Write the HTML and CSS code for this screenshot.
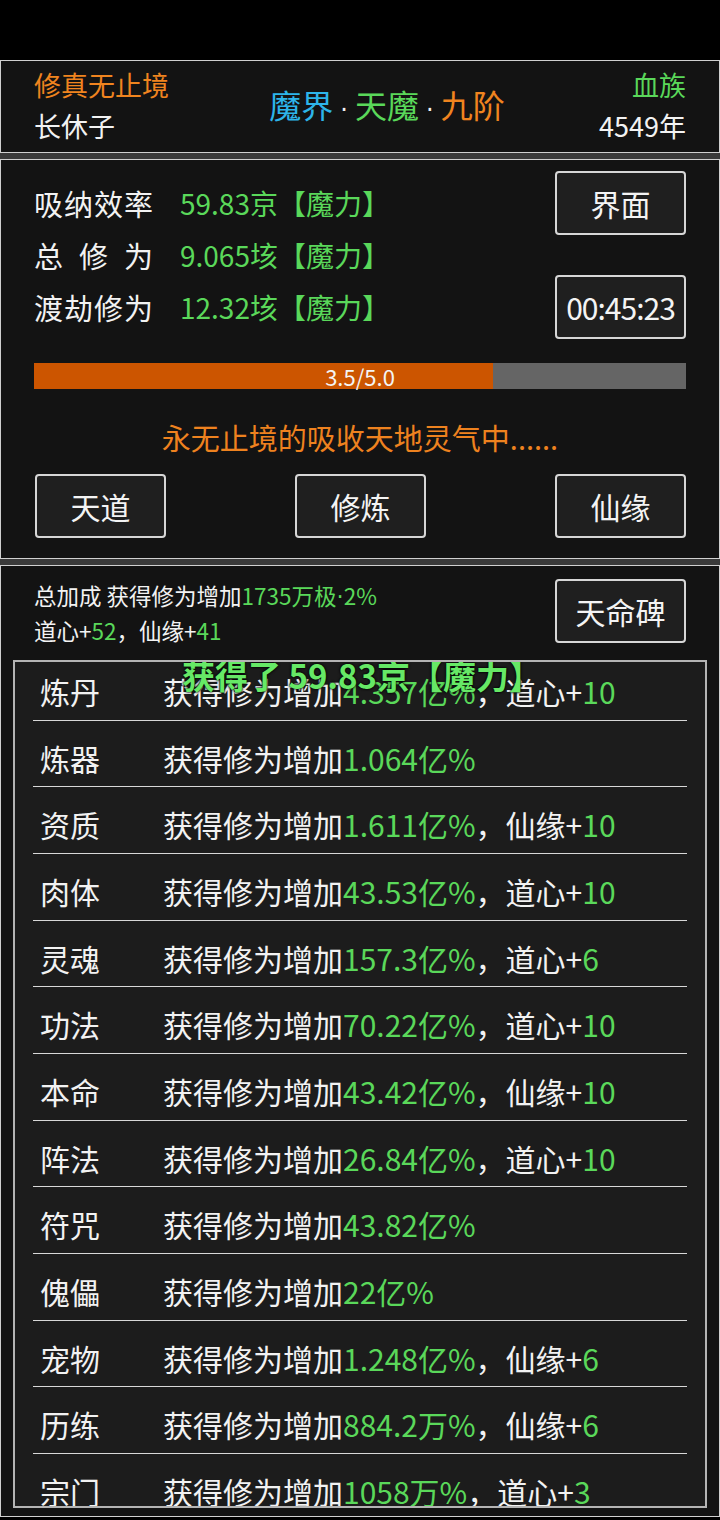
FILE: index.html
```html
<!DOCTYPE html>
<html lang="zh">
<head>
    <meta charset="UTF-8">
    <meta name="viewport" content="width=device-width, initial-scale=1.0">
    <title>修真无止境</title>
    <link rel="stylesheet" href="styles.css">
</head>
<body>
    <div class="status-bar"></div>

    <div class="panels">
        <!-- 头部信息 -->
        <div class="panel header">
            <div class="header-side">
                <div class="orange">修真无止境</div>
                <div>长休子</div>
            </div>
            <div class="realm">
                <span class="cyan">魔界</span><span class="dot">·</span><span class="green">天魔</span><span class="dot">·</span><span class="orange">九阶</span>
            </div>
            <div class="header-side right">
                <div class="green">血族</div>
                <div>4549年</div>
            </div>
        </div>

        <!-- 修炼面板 -->
        <div class="panel cultivate">
            <div class="cultivate-top">
                <div class="stats">
                    <div class="stat-row">
                        <span class="stat-label">吸纳效率</span>
                        <span class="green">59.83京【魔力】</span>
                    </div>
                    <div class="stat-row">
                        <span class="stat-label">总修为</span>
                        <span class="green">9.065垓【魔力】</span>
                    </div>
                    <div class="stat-row">
                        <span class="stat-label">渡劫修为</span>
                        <span class="green">12.32垓【魔力】</span>
                    </div>
                </div>
                <div class="side-buttons">
                    <button class="btn">界面</button>
                    <button class="btn timer">00:45:23</button>
                </div>
            </div>

            <div class="progress">
                <div class="progress-fill" style="width: 70.4%"></div>
                <span class="progress-text">3.5/5.0</span>
            </div>

            <div class="state-text">永无止境的吸收天地灵气中......</div>

            <div class="action-buttons">
                <button class="btn">天道</button>
                <button class="btn">修炼</button>
                <button class="btn">仙缘</button>
            </div>
        </div>

        <!-- 加成面板 -->
        <div class="panel bonus">
            <div class="bonus-top">
                <div class="bonus-summary">
                    <div>总加成 获得修为增加<span class="green">1735万极<span class="dot">·</span>2%</span></div>
                    <div>道心+<span class="green">52</span>，仙缘+<span class="green">41</span></div>
                </div>
                <button class="btn">天命碑</button>
            </div>

            <div class="bonus-box">
                <div class="toast">获得了 59.83京【魔力】</div>
                <div class="bonus-list">
                    <div class="bonus-row"><span class="row-name">炼丹</span><span>获得修为增加<span class="green">4.357亿%</span>，道心+<span class="green">10</span></span></div>
                    <div class="bonus-row"><span class="row-name">炼器</span><span>获得修为增加<span class="green">1.064亿%</span></span></div>
                    <div class="bonus-row"><span class="row-name">资质</span><span>获得修为增加<span class="green">1.611亿%</span>，仙缘+<span class="green">10</span></span></div>
                    <div class="bonus-row"><span class="row-name">肉体</span><span>获得修为增加<span class="green">43.53亿%</span>，道心+<span class="green">10</span></span></div>
                    <div class="bonus-row"><span class="row-name">灵魂</span><span>获得修为增加<span class="green">157.3亿%</span>，道心+<span class="green">6</span></span></div>
                    <div class="bonus-row"><span class="row-name">功法</span><span>获得修为增加<span class="green">70.22亿%</span>，道心+<span class="green">10</span></span></div>
                    <div class="bonus-row"><span class="row-name">本命</span><span>获得修为增加<span class="green">43.42亿%</span>，仙缘+<span class="green">10</span></span></div>
                    <div class="bonus-row"><span class="row-name">阵法</span><span>获得修为增加<span class="green">26.84亿%</span>，道心+<span class="green">10</span></span></div>
                    <div class="bonus-row"><span class="row-name">符咒</span><span>获得修为增加<span class="green">43.82亿%</span></span></div>
                    <div class="bonus-row"><span class="row-name">傀儡</span><span>获得修为增加<span class="green">22亿%</span></span></div>
                    <div class="bonus-row"><span class="row-name">宠物</span><span>获得修为增加<span class="green">1.248亿%</span>，仙缘+<span class="green">6</span></span></div>
                    <div class="bonus-row"><span class="row-name">历练</span><span>获得修为增加<span class="green">884.2万%</span>，仙缘+<span class="green">6</span></span></div>
                    <div class="bonus-row"><span class="row-name">宗门</span><span>获得修为增加<span class="green">1058万%</span>，道心+<span class="green">3</span></span></div>
                </div>
            </div>
        </div>
    </div>
</body>
</html>
```

FILE: styles.css
```css
body {
    margin: 0;
    width: 720px;
    height: 1520px;
    overflow: hidden;
    background-color: #000;
    color: #f2f2f2;
    font-family: "Noto Sans CJK SC", "Noto Sans", sans-serif;
}

.status-bar {
    height: 60px;
    background-color: #000;
}

.panels {
    display: flex;
    flex-direction: column;
    gap: 6px;
    background-color: #3a3a3a;
}

.panel {
    box-sizing: border-box;
    border: 1px solid #d0d0d0;
    background-color: #131313;
    padding: 0 33px 0 33px;
}

.green {
    color: #5ad85a;
}

.orange {
    color: #f0841f;
}

.cyan {
    color: #2db5ea;
}

/* narrow middle dot, the CJK font draws it full width */
.dot {
    font-family: "DejaVu Sans", sans-serif;
}

/* header */
.header {
    height: 93px;
    display: flex;
    justify-content: space-between;
    align-items: center;
}

.header-side {
    font-size: 27px;
    line-height: 41px;
    margin-top: -4px;
    width: 160px;
}

.header-side.right {
    text-align: right;
}

.realm {
    font-size: 32px;
    margin-top: -6px;
    margin-left: 54px;
}

.realm .dot {
    color: #f2f2f2;
    font-size: 24px;
    padding: 0 7px;
}

/* cultivate */
.cultivate {
    height: 400px;
    padding-top: 11px;
}

.cultivate-top {
    display: flex;
    justify-content: space-between;
}

.stats {
    padding-top: 6px;
    font-size: 28px;
}

.stat-row {
    display: flex;
    line-height: 52px;
    height: 52px;
}

.stat-label {
    width: 119px;
    margin-right: 27px;
    text-align-last: justify;
    font-size: 29px;
}

.side-buttons {
    display: flex;
    flex-direction: column;
    gap: 40px;
}

.btn {
    box-sizing: border-box;
    width: 131px;
    height: 64px;
    border: 2px solid #d6d6d6;
    border-radius: 4px;
    background-color: #1f1f1f;
    color: #f4f4f4;
    font-family: "Noto Sans CJK SC", "Noto Sans", sans-serif;
    font-size: 30px;
    padding: 0;
    cursor: pointer;
}

.btn.timer {
    font-size: 30px;
    letter-spacing: -1px;
}

.progress {
    position: relative;
    margin-top: 24px;
    height: 26px;
    background-color: #656565;
}

.progress-fill {
    height: 100%;
    background-color: #cc5500;
}

.progress-text {
    position: absolute;
    left: 0;
    right: 0;
    top: 0;
    text-align: center;
    font-size: 22px;
    line-height: 26px;
    color: #f4f4f4;
}

.state-text {
    margin-top: 28px;
    text-align: center;
    font-size: 29px;
    line-height: 40px;
    color: #ee821f;
}

.action-buttons {
    margin-top: 17px;
    padding-left: 1px;
    display: flex;
    justify-content: space-between;
}

/* bonus */
.bonus {
    height: 952px;
    padding: 0 12px;
}

.bonus-top {
    display: flex;
    justify-content: space-between;
    padding: 13px 21px 0 21px;
}

.bonus-summary {
    font-size: 22.5px;
    line-height: 33px;
}

.bonus-box {
    position: relative;
    margin-top: 13px;
    height: 848px;
    box-sizing: border-box;
    border: 2px solid #b4b4b4;
    background-color: #1c1c1c;
    padding: 0 18px;
    overflow: hidden;
}

.bonus-list {
    margin-top: -8px;
}

.bonus-row {
    box-sizing: border-box;
    height: 66.67px;
    padding: 21px 0 0 7px;
    line-height: 32px;
    font-size: 30px;
    border-bottom: 1px solid #d8d8d8;
    display: flex;
    white-space: nowrap;
}

.row-name {
    width: 123px;
    flex-shrink: 0;
}

.toast {
    position: absolute;
    top: -5px;
    left: 0;
    right: 0;
    text-align: center;
    padding-left: 4px;
    font-size: 33px;
    line-height: 36px;
    font-weight: bold;
    color: #66e866;
    text-shadow: 0 0 3px #000, 0 0 2px #000;
    z-index: 1;
}
```
